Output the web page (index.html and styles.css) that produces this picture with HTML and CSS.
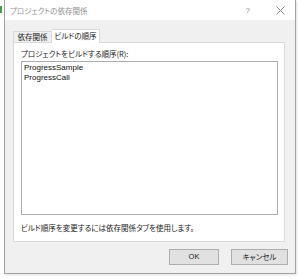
FILE: index.html
```html
<!DOCTYPE html>
<html lang="ja">
<head>
<meta charset="utf-8">
<link rel="stylesheet" href="styles.css">
</head>
<body>
<div class="edge-mark"></div>
<div class="window">
  <div class="titlebar">
    <span class="title">プロジェクトの依存関係</span>
    <span class="help">?</span>
    <svg class="close" width="9" height="9" viewBox="0 0 9 9"><path d="M0.5 0.5L8.5 8.5M8.5 0.5L0.5 8.5" stroke="#8a8a8a" stroke-width="1" fill="none"/></svg>
  </div>
  <div class="body">
    <div class="tabs">
      <div class="tab">依存関係</div>
      <div class="tab active">ビルドの順序</div>
    </div>
    <div class="panel">
      <div class="label">プロジェクトをビルドする順序(R):</div>
      <div class="listbox">
        <div class="item">ProgressSample</div>
        <div class="item">ProgressCall</div>
      </div>
      <div class="note">ビルド順序を変更するには依存関係タブを使用します。</div>
    </div>
    <div class="buttons">
      <button class="btn ok">OK</button>
      <button class="btn">キャンセル</button>
    </div>
  </div>
</div>
</body>
</html>
```
FILE: styles.css
```css
html, body {
  margin: 0;
  padding: 0;
  background: #ffffff;
  width: 300px;
  height: 279px;
  overflow: hidden;
}
body {
  position: relative;
  font-family: "Noto Sans CJK JP", "Liberation Sans", sans-serif;
  font-feature-settings: "palt";
  font-size: 8px;
  color: #1a1a1a;
}
.edge-mark {
  position: absolute;
  left: 0;
  top: 6px;
  width: 2px;
  height: 7px;
  background: #4a9f4a;
}
.window {
  margin-left: 4px;
  width: 292px;
  height: 274px;
  box-sizing: border-box;
  border: 1px solid #a3a3a3;
  border-top: none;
  display: flex;
  flex-direction: column;
  box-shadow: 1px 1px 2px rgba(0,0,0,0.12);
}
.titlebar {
  height: 20px;
  background: #ffffff;
  display: flex;
  align-items: center;
  padding-left: 5px;
  flex-shrink: 0;
}
.title {
  color: #8f8f8f;
  font-size: 7.5px;
  flex: 1;
}
.help {
  color: #8f8f8f;
  font-family: "Liberation Sans", sans-serif;
  font-size: 8px;
  margin-right: 26px;
}
.close {
  margin-right: 10px;
}
.body {
  flex: 1;
  background: #f0f0f0;
  display: flex;
  flex-direction: column;
  padding: 8px 10px 0 8px;
}
.tabs {
  display: flex;
  align-items: flex-end;
  height: 14px;
  position: relative;
  z-index: 1;
}
.tab {
  height: 11px;
  line-height: 10px;
  width: 39px;
  box-sizing: border-box;
  text-align: center;
  white-space: nowrap;
  border: 1px solid #d9d9d9;
  border-bottom: none;
  background: #f0f0f0;
  color: #1a1a1a;
  font-size: 7.5px;
}
.tab.active {
  height: 14px;
  line-height: 12px;
  width: 48px;
  background: #ffffff;
  margin-bottom: -1px;
  border-left: none;
}
.panel {
  height: 200px;
  box-sizing: border-box;
  background: #ffffff;
  border: 1px solid #d9d9d9;
  padding: 4px 6px 0 7px;
  display: flex;
  flex-direction: column;
}
.label {
  height: 14px;
  line-height: 14px;
  font-size: 7.5px;
}
.listbox {
  height: 154px;
  box-sizing: border-box;
  border: 1px solid #abadb3;
  padding: 1px 2px;
  font-family: "Liberation Sans", sans-serif;
  font-size: 8px;
  color: #111;
}
.item {
  height: 10px;
  line-height: 10px;
}
.note {
  margin-top: 8px;
  font-size: 7.5px;
  line-height: 10px;
}
.buttons {
  display: flex;
  justify-content: flex-end;
  gap: 12px;
  margin-top: 7px;
  margin-right: -3px;
}
.btn {
  width: 57px;
  height: 16px;
  padding: 0;
  border: 1px solid #adadad;
  background: #e1e1e1;
  font-family: "Noto Sans CJK JP", "Liberation Sans", sans-serif;
  font-feature-settings: "palt";
  font-size: 7.5px;
  color: #1a1a1a;
  line-height: 14px;
}
.btn.ok {
  width: 50px;
  font-family: "Liberation Sans", sans-serif;
}
```
